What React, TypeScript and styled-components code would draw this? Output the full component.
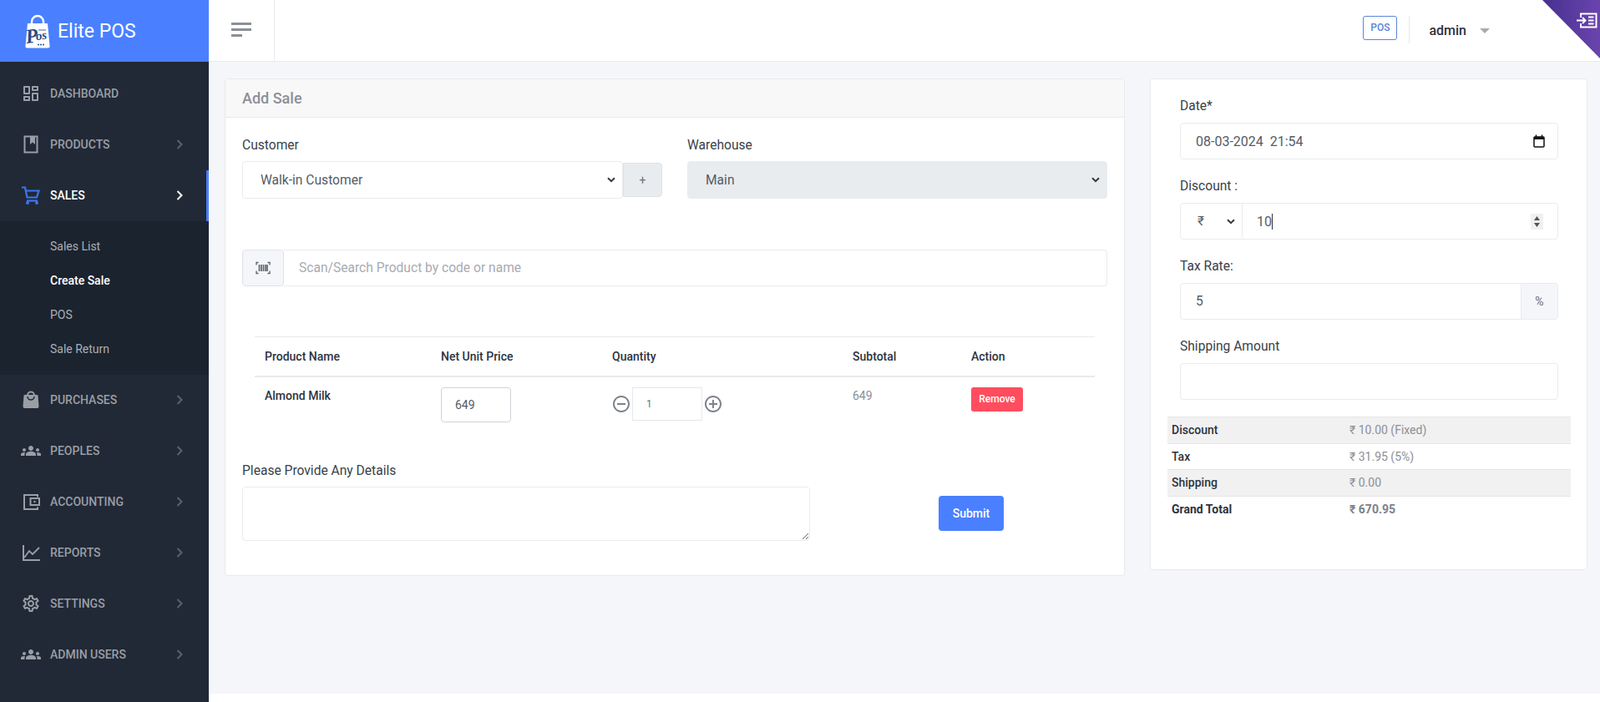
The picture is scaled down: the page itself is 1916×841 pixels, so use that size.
import React from 'react'
import styled, { createGlobalStyle } from 'styled-components'
import { MdGroups, MdOutlineSettings } from 'react-icons/md'
import { RiDashboardLine, RiIndeterminateCircleLine, RiAddCircleLine } from 'react-icons/ri'

const selectArrow =
    "url(\"data:image/svg+xml,%3Csvg xmlns='http://www.w3.org/2000/svg' width='10' height='7' viewBox='0 0 10 7'%3E%3Cpath d='M1 1.200l4 4 4-4' fill='none' stroke='%23343a40' stroke-width='2'/%3E%3C/svg%3E\")"

const GlobalStyle = createGlobalStyle`
    html, body {
        margin: 0;
        padding: 0;
        background: #fff;
        font-family: Roboto, "Liberation Sans", sans-serif;
        color: #2d3340;
    }
    * {
        box-sizing: border-box;
    }
`

const Page = styled.div`
    display: flex;
    min-height: 841px;
`

const Sidebar = styled.aside`
    width: 250px;
    flex-shrink: 0;
    background: #212936;
    display: flex;
    flex-direction: column;
`

const Brand = styled.div`
    height: 74px;
    background: #4a80ff;
    display: flex;
    align-items: center;
    gap: 9px;
    padding: 0 0 0 30px;
`

const BrandName = styled.span`
    font-size: 23px;
    color: #fff;
`

const Menu = styled.nav`
    padding-top: 8px;
    display: flex;
    flex-direction: column;
`

const MenuItem = styled.a<{ $active?: boolean }>`
    height: 61px;
    display: flex;
    align-items: center;
    gap: 11px;
    padding: 0 28px 2px 25px;
    font-size: 14px;
    font-weight: 500;
    text-transform: uppercase;
    color: ${({ $active }) => ($active ? '#fff' : '#9a9ea6')};
    border-right: 3px solid ${({ $active }) => ($active ? '#4a80ff' : 'transparent')};
    svg:first-child {
        color: ${({ $active }) => ($active ? '#3f74f0' : '#9a9ea6')};
        flex-shrink: 0;
    }
`

const MenuLabel = styled.span`
    flex: 1;
`

const ChevronMark = styled.svg<{ $active?: boolean }>`
    color: ${({ $active }) => ($active ? '#fff' : '#5a616d')};
    fill: none;
    stroke: currentColor;
    stroke-width: 2;
`

const SubMenu = styled.div`
    background: #1b232e;
    padding: 10px 0;
    display: flex;
    flex-direction: column;
`

const SubItem = styled.a<{ $active?: boolean }>`
    height: 41px;
    display: flex;
    align-items: center;
    padding: 0 0 2px 60px;
    font-size: 14px;
    font-weight: ${({ $active }) => ($active ? 500 : 400)};
    color: ${({ $active }) => ($active ? '#fff' : '#a9afb8')};
`

const Main = styled.div`
    flex: 1;
    min-width: 0;
    display: flex;
    flex-direction: column;
`

const Topbar = styled.header`
    position: relative;
    height: 74px;
    background: #fff;
    border-bottom: 1px solid #e8eaee;
    display: flex;
    align-items: stretch;
    overflow: hidden;
`

const Toggle = styled.div`
    width: 79px;
    border-right: 1px solid #e8eaee;
    display: flex;
    flex-direction: column;
    justify-content: center;
    gap: 4px;
    padding: 0 0 3px 27px;
`

const ToggleBar = styled.span<{ $w: number }>`
    display: block;
    width: ${({ $w }) => $w}px;
    height: 3px;
    background: #8b8f97;
`

const TopRight = styled.div`
    margin-left: auto;
    display: flex;
    align-items: center;
    padding: 0 132px 5px 0;
`

const PosBadge = styled.a`
    width: 41px;
    height: 29px;
    margin-bottom: 2px;
    border: 1px solid #5b85d8;
    border-radius: 3px;
    color: #5b85d8;
    font-size: 12px;
    font-weight: 500;
    display: flex;
    align-items: center;
    justify-content: center;
`

const TopDivider = styled.span`
    width: 1px;
    height: 33px;
    margin: 3px 23px 0 14px;
    background: #e8e8e8;
`

const UserName = styled.span`
    font-size: 16px;
    font-weight: 500;
    color: #2d3340;
    margin-top: 4px;
`

const Caret = styled.span`
    margin: 6px 0 0 16px;
    border-left: 6px solid transparent;
    border-right: 6px solid transparent;
    border-top: 6px solid #a7abb2;
`

const CornerTab = styled.div`
    position: absolute;
    top: 0;
    right: 0;
    width: 69px;
    height: 70px;
    background: linear-gradient(90deg, #46308f 0%, #6a44ad 100%);
    clip-path: polygon(0 0, 100% 0, 100% 100%);
    svg {
        position: absolute;
        top: 15px;
        right: 3px;
    }
`

const Content = styled.main`
    flex: 1;
    background: #f4f6f9;
    padding: 20px 15px 0 19px;
    display: flex;
    align-items: flex-start;
    gap: 30px;
`

const Footer = styled.div`
    height: 10px;
    background: #fff;
`

const Card = styled.section`
    background: #fff;
    border: 1px solid #e8eaee;
    border-radius: 4px;
`

const SaleCard = styled(Card)`
    width: 1078px;
    flex-shrink: 0;
`

const SideCard = styled(Card)`
    width: 524px;
    flex-shrink: 0;
    padding: 20px 19px 56px 20px;
`

const CardHead = styled.div`
    height: 46px;
    background: #f8f8f8;
    border-bottom: 1px solid #e8eaee;
    display: flex;
    align-items: center;
    padding-left: 20px;
    font-size: 18px;
    font-weight: 500;
    color: #8c9097;
`

const CardBody = styled.div`
    padding: 21px 20px 41px;
`

const FormGrid = styled.div`
    display: grid;
    grid-template-columns: 503px 503px;
    gap: 30px;
`

const Label = styled.label`
    display: block;
    font-size: 15.6px;
    line-height: 24px;
    margin-bottom: 7px;
    color: #3a3f4a;
`

const FieldLabel = styled(Label)`
    margin-bottom: 8px;
`

const Select = styled.select<{ $grey?: boolean }>`
    appearance: none;
    height: 45px;
    width: 100%;
    border: 1px solid #e9ebee;
    border-radius: 4px;
    padding: 0 24px 0 21px;
    font-family: inherit;
    font-size: 15.6px;
    color: #555b66;
    background: ${({ $grey }) => ($grey ? '#e9ecef' : '#fff')} ${selectArrow} no-repeat right 8px center;
    outline: none;
`

const SelectRow = styled.div`
    display: flex;
    align-items: center;
`

const AddButton = styled.button`
    width: 47px;
    height: 41px;
    flex-shrink: 0;
    border: 1px solid #dfe2e6;
    border-radius: 0 4px 4px 0;
    background: #e9ecef;
    color: #6a6f78;
    font-family: inherit;
    font-size: 14px;
`

const SearchRow = styled.div`
    display: flex;
    margin-top: 61px;
`

const ScanButton = styled.button`
    width: 50px;
    height: 44px;
    flex-shrink: 0;
    border: 1px solid #dfe2e6;
    border-radius: 4px;
    background: #f4f6f9;
    display: flex;
    align-items: center;
    justify-content: center;
    padding: 0;
`

const TextInput = styled.input`
    width: 100%;
    height: 44px;
    border: 1px solid #e9ebee;
    border-radius: 4px;
    padding: 0 18px;
    font-family: inherit;
    font-size: 15.6px;
    color: #555b66;
    background: #fff;
    outline: none;
    &::placeholder {
        color: #a8abb2;
    }
`

const SearchInput = styled(TextInput)`
    border-left: none;
    border-radius: 0 4px 4px 0;
`

const ItemsTable = styled.table`
    width: 1006px;
    margin: 60px 15px 0;
    border-collapse: collapse;
    table-layout: fixed;
    font-size: 14px;
`

const Th = styled.th`
    height: 47px;
    padding: 0 12px;
    text-align: left;
    font-weight: 500;
    color: #2d3340;
    border-top: 1px solid #e8eaee;
    border-bottom: 2px solid #e8eaee;
`

const Td = styled.td<{ $muted?: boolean; $strong?: boolean }>`
    padding: 12px 12px 46px;
    vertical-align: top;
    line-height: 20px;
    font-weight: ${({ $strong }) => ($strong ? 500 : 400)};
    color: ${({ $muted }) => ($muted ? '#8a8f98' : '#2d3340')};
`

const PriceInput = styled.input`
    width: 84px;
    height: 42px;
    border: 1px solid #ced4da;
    border-radius: 4px;
    padding: 0 16px;
    font-family: inherit;
    font-size: 14px;
    color: #555b66;
    outline: none;
`

const QtyControl = styled.div`
    display: flex;
    align-items: center;
    gap: 1px;
    color: #7d828b;
    margin-left: -1px;
`

const QtyInput = styled.input`
    width: 84px;
    height: 40px;
    border: 1px solid #e4e9ee;
    padding: 0 16px;
    font-family: inherit;
    font-size: 12px;
    color: #6b7079;
    outline: none;
`

const RemoveButton = styled.button`
    display: block;
    width: 62px;
    height: 29px;
    border: none;
    border-radius: 3px;
    background: #ff4d5f;
    color: #fff;
    font-family: inherit;
    font-size: 12px;
    font-weight: 500;
    padding: 0;
`

const NotesRow = styled.div`
    display: flex;
    align-items: flex-start;
`

const NotesColumn = styled.div`
    width: 680px;
`

const NotesArea = styled.textarea`
    display: block;
    width: 100%;
    height: 65px;
    border: 1px solid #e9ebee;
    border-radius: 4px;
    outline: none;
`

const SubmitButton = styled.button`
    width: 78px;
    height: 42px;
    margin: 42px 0 0 154px;
    border: none;
    border-radius: 4px;
    background: #4a80ff;
    color: #fff;
    font-family: inherit;
    font-size: 14px;
    font-weight: 500;
`

const FormSection = styled.div`
    padding: 0 15px;
    display: flex;
    flex-direction: column;
    gap: 20px;
`

const InputShell = styled.div`
    height: 44px;
    display: flex;
    align-items: center;
    border: 1px solid #e9ebee;
    border-radius: 4px;
    background: #fff;
`

const BareInput = styled.input<{ $w?: string }>`
    width: ${({ $w }) => $w || '100%'};
    flex-shrink: 0;
    border: none;
    outline: none;
    padding: 0;
    font-family: inherit;
    font-size: 16px;
    color: #555b66;
    background: transparent;
`

const DateShell = styled(InputShell)`
    padding: 0 15px 0 18px;
    justify-content: space-between;
    ${BareInput} {
        width: 200px;
    }
`

const GroupRow = styled.div`
    display: flex;
`

const CurrencySelect = styled(Select)`
    width: 75px;
    height: 44px;
    flex-shrink: 0;
    padding: 0 4px 0 20px;
    border-radius: 4px 0 0 4px;
`

const AmountShell = styled(InputShell)`
    flex: 1;
    border-left: none;
    border-radius: 0 4px 4px 0;
    padding: 0 17px 0 17px;
`

const TextCursor = styled.span`
    width: 1px;
    height: 19px;
    background: #2d3340;
`

const Spinner = styled.span`
    margin-left: auto;
    width: 15px;
    height: 19px;
    background: #f0f0f0;
    display: flex;
    align-items: center;
    justify-content: center;
`

const TaxInput = styled(TextInput)`
    flex: 1;
    min-width: 0;
    padding: 0 18px;
    border-radius: 4px 0 0 4px;
`

const Addon = styled.span`
    width: 44px;
    flex-shrink: 0;
    border: 1px solid #e9ebee;
    border-left: none;
    border-radius: 0 4px 4px 0;
    background: #f4f6f9;
    color: #6a6f78;
    font-size: 14px;
    display: flex;
    align-items: center;
    justify-content: center;
`

const SummaryTable = styled.table`
    width: 483px;
    margin-top: 20px;
    border-collapse: collapse;
    table-layout: fixed;
    font-size: 14px;
`

const SummaryRow = styled.tr<{ $striped?: boolean }>`
    height: 31.5px;
    background: ${({ $striped }) => ($striped ? '#f1f1f1' : '#fff')};
    border-top: 1px solid #e6e6e6;
`

const SummaryName = styled.td<{ $bold?: boolean }>`
    width: 218px;
    padding: 0 5px;
    font-weight: ${({ $bold }) => ($bold ? 700 : 500)};
    color: #2d3340;
`

const SummaryValue = styled.td<{ $bold?: boolean }>`
    padding: 0;
    font-weight: ${({ $bold }) => ($bold ? 700 : 400)};
    color: ${({ $bold }) => ($bold ? '#7d828b' : '#8c9097')};
`

function BagLogo() {
    return (
        <svg width="30" height="41" viewBox="0 0 30 41">
            <path d="M8 13V9a7 7 0 0 1 14 0v4" fill="none" stroke="#fff" strokeWidth="2.4" />
            <path d="M3 11h24l2.5 27a2 2 0 0 1-2 2.4H2.5a2 2 0 0 1-2-2.4z" fill="#fff" />
            <g transform="rotate(-8 15 28)" fontFamily="'Liberation Serif', serif" fontStyle="italic" fontWeight="700" fill="#2a4a86">
                <text x="1" y="33" fontSize="24">
                    P
                </text>
                <text x="13" y="31" fontSize="15">
                    os
                </text>
            </g>
            <rect x="16" y="18" width="9" height="2" fill="#9fb0cc" />
            <circle cx="16" cy="36.5" r="1" fill="#2a4a86" />
            <circle cx="19" cy="36.5" r="1" fill="#2a4a86" />
            <circle cx="22" cy="36.5" r="1" fill="#2a4a86" />
        </svg>
    )
}

function Chevron({ active }: { active?: boolean }) {
    return (
        <ChevronMark $active={active} width="8" height="12" viewBox="0 0 8 12">
            <path d="M1.5 1l5 5-5 5" />
        </ChevronMark>
    )
}

type IconProps = { size: number }

function BookIcon({ size }: IconProps) {
    return (
        <svg width={size} height={size} viewBox="0 0 24 24">
            <path d="M4.5 2.5h15v19h-15z" fill="none" stroke="currentColor" strokeWidth="2" />
            <path d="M11 3h6v9l-3-2.5-3 2.5z" fill="currentColor" />
        </svg>
    )
}

function CartIcon({ size }: IconProps) {
    return (
        <svg width={size} height={size} viewBox="0 0 24 24" fill="none" stroke="currentColor" strokeWidth="2.2">
            <path d="M1 2.5h4l2.5 12h12.5" />
            <path d="M5.5 6.5h16l-2.5 8" />
            <path d="M7 18.5h13" />
            <circle cx="8" cy="21" r="2" fill="currentColor" stroke="none" />
            <circle cx="19" cy="21" r="2" fill="currentColor" stroke="none" />
        </svg>
    )
}

function BagIcon({ size }: IconProps) {
    return (
        <svg width={size} height={size} viewBox="0 0 24 24">
            <path d="M8 8V6.5a4 4 0 0 1 8 0V8" fill="none" stroke="currentColor" strokeWidth="2" />
            <path d="M4.5 6h15a1 1 0 0 1 1 1l1 13a2 2 0 0 1-2 2H4.500a2 2 0 0 1-2-2l1-13a1 1 0 0 1 1-1z" fill="currentColor" />
            <path d="M8 8a4 4 0 0 0 8 0" fill="none" stroke="#212936" strokeWidth="1.6" />
        </svg>
    )
}

function WalletIcon({ size }: IconProps) {
    return (
        <svg width={size} height={size} viewBox="0 0 24 24" fill="none" stroke="currentColor" strokeWidth="2">
            <path d="M20 6.5V4H4v17h16v-2.5" />
            <path d="M11.5 8h10.5v8H11.5z" />
            <circle cx="16.5" cy="12" r="1.2" fill="currentColor" stroke="none" />
        </svg>
    )
}

function ChartIcon({ size }: IconProps) {
    return (
        <svg width={size} height={size} viewBox="0 0 24 24" fill="none" stroke="currentColor" strokeWidth="2">
            <path d="M3 3v18h20" />
            <path d="M4 18l6-8 4 4 8-8" strokeWidth="1.8" />
        </svg>
    )
}

function BarcodeIcon() {
    return (
        <svg width="18" height="16" viewBox="0 0 18 16" fill="none" stroke="#5c6068" strokeWidth="1.3">
            <path d="M3.5 1.5H1v3M14.5 1.5H17v3M3.5 14.5H1v-3M14.5 14.5H17v-3" />
            <path d="M4.5 4v8M7 4v8M9.5 4v8M12 4v8M14 4v8" strokeWidth="1.6" />
        </svg>
    )
}

function CalendarIcon() {
    return (
        <svg width="14" height="16" viewBox="0 0 14 16" fill="none" stroke="#111">
            <rect x="1" y="3" width="12" height="12" rx="1" strokeWidth="1.5" />
            <path d="M1 4.5h12" strokeWidth="3" />
            <path d="M3.5 0.5v2.5M10.5 0.5v2.5" strokeWidth="1.5" />
        </svg>
    )
}

function SpinArrows() {
    return (
        <svg width="9" height="15" viewBox="0 0 9 15" fill="#555">
            <path d="M4.5 1L8 6H1zM4.5 14L1 9h7z" />
        </svg>
    )
}

function PanelIcon() {
    return (
        <svg width="25" height="19" viewBox="0 0 25 19" fill="none" stroke="#fff" strokeWidth="2">
            <path d="M5 6V1.5h18.5v16H5V13" />
            <path d="M0 9.5h10M7 6l3.5 3.5L7 13" />
            <path d="M14 5.5h6.5M14 9.5h6.5M14 13.5h6.5" />
        </svg>
    )
}

const menuAbove = [
    { label: 'Dashboard', Icon: RiDashboardLine, chevron: false },
    { label: 'Products', Icon: BookIcon, chevron: true },
]

const salesLinks = ['Sales List', 'Create Sale', 'POS', 'Sale Return']

const menuBelow = [
    { label: 'Purchases', Icon: BagIcon },
    { label: 'Peoples', Icon: MdGroups },
    { label: 'Accounting', Icon: WalletIcon },
    { label: 'Reports', Icon: ChartIcon },
    { label: 'Settings', Icon: MdOutlineSettings },
    { label: 'Admin Users', Icon: MdGroups },
]

const totals = [
    { name: 'Discount', value: '₹ 10.00 (Fixed)' },
    { name: 'Tax', value: '₹ 31.95 (5%)' },
    { name: 'Shipping', value: '₹ 0.00' },
    { name: 'Grand Total', value: '₹ 670.95', bold: true },
]

export default function App() {
    return (
        <Page>
            <GlobalStyle />
            <Sidebar>
                <Brand>
                    <BagLogo />
                    <BrandName>Elite POS</BrandName>
                </Brand>
                <Menu>
                    {menuAbove.map(({ label, Icon, chevron }) => (
                        <MenuItem key={label}>
                            <Icon size={24} />
                            <MenuLabel>{label}</MenuLabel>
                            {chevron && <Chevron />}
                        </MenuItem>
                    ))}
                    <MenuItem $active>
                        <CartIcon size={24} />
                        <MenuLabel>Sales</MenuLabel>
                        <Chevron active />
                    </MenuItem>
                    <SubMenu>
                        {salesLinks.map((link) => (
                            <SubItem key={link} $active={link === 'Create Sale'}>
                                {link}
                            </SubItem>
                        ))}
                    </SubMenu>
                    {menuBelow.map(({ label, Icon }) => (
                        <MenuItem key={label}>
                            <Icon size={24} />
                            <MenuLabel>{label}</MenuLabel>
                            <Chevron />
                        </MenuItem>
                    ))}
                </Menu>
            </Sidebar>
            <Main>
                <Topbar>
                    <Toggle>
                        <ToggleBar $w={24} />
                        <ToggleBar $w={24} />
                        <ToggleBar $w={13} />
                    </Toggle>
                    <TopRight>
                        <PosBadge>POS</PosBadge>
                        <TopDivider />
                        <UserName>admin</UserName>
                        <Caret />
                    </TopRight>
                    <CornerTab>
                        <PanelIcon />
                    </CornerTab>
                </Topbar>
                <Content>
                    <SaleCard>
                        <CardHead>Add Sale</CardHead>
                        <CardBody>
                            <FormGrid>
                                <div>
                                    <Label>Customer</Label>
                                    <SelectRow>
                                        <Select>
                                            <option>Walk-in Customer</option>
                                        </Select>
                                        <AddButton>+</AddButton>
                                    </SelectRow>
                                </div>
                                <div>
                                    <Label>Warehouse</Label>
                                    <Select $grey>
                                        <option>Main</option>
                                    </Select>
                                </div>
                            </FormGrid>
                            <SearchRow>
                                <ScanButton>
                                    <BarcodeIcon />
                                </ScanButton>
                                <SearchInput placeholder="Scan/Search Product by code or name" />
                            </SearchRow>
                            <ItemsTable>
                                <colgroup>
                                    <col width="211" />
                                    <col width="205" />
                                    <col width="288" />
                                    <col width="142" />
                                    <col width="160" />
                                </colgroup>
                                <thead>
                                    <tr>
                                        <Th>Product Name</Th>
                                        <Th>Net Unit Price</Th>
                                        <Th>Quantity</Th>
                                        <Th>Subtotal</Th>
                                        <Th>Action</Th>
                                    </tr>
                                </thead>
                                <tbody>
                                    <tr>
                                        <Td $strong>Almond Milk</Td>
                                        <Td>
                                            <PriceInput defaultValue="649" />
                                        </Td>
                                        <Td>
                                            <QtyControl>
                                                <RiIndeterminateCircleLine size={24} />
                                                <QtyInput defaultValue="1" />
                                                <RiAddCircleLine size={24} />
                                            </QtyControl>
                                        </Td>
                                        <Td $muted>649</Td>
                                        <Td>
                                            <RemoveButton>Remove</RemoveButton>
                                        </Td>
                                    </tr>
                                </tbody>
                            </ItemsTable>
                            <NotesRow>
                                <NotesColumn>
                                    <Label>Please Provide Any Details</Label>
                                    <NotesArea />
                                </NotesColumn>
                                <SubmitButton>Submit</SubmitButton>
                            </NotesRow>
                        </CardBody>
                    </SaleCard>
                    <SideCard>
                        <FormSection>
                            <div>
                                <FieldLabel>Date*</FieldLabel>
                                <DateShell>
                                    <BareInput defaultValue="08-03-2024  21:54" />
                                    <CalendarIcon />
                                </DateShell>
                            </div>
                            <div>
                                <FieldLabel>Discount :</FieldLabel>
                                <GroupRow>
                                    <CurrencySelect>
                                        <option>₹</option>
                                    </CurrencySelect>
                                    <AmountShell>
                                        <BareInput $w="18px" defaultValue="10" />
                                        <TextCursor />
                                        <Spinner>
                                            <SpinArrows />
                                        </Spinner>
                                    </AmountShell>
                                </GroupRow>
                            </div>
                            <div>
                                <FieldLabel>Tax Rate:</FieldLabel>
                                <GroupRow>
                                    <TaxInput defaultValue="5" />
                                    <Addon>%</Addon>
                                </GroupRow>
                            </div>
                            <div>
                                <FieldLabel>Shipping Amount</FieldLabel>
                                <TextInput />
                            </div>
                        </FormSection>
                        <SummaryTable>
                            <tbody>
                                {totals.map(({ name, value, bold }, i) => (
                                    <SummaryRow key={name} $striped={i % 2 === 0}>
                                        <SummaryName $bold={bold}>{name}</SummaryName>
                                        <SummaryValue $bold={bold}>{value}</SummaryValue>
                                    </SummaryRow>
                                ))}
                            </tbody>
                        </SummaryTable>
                    </SideCard>
                </Content>
                <Footer />
            </Main>
        </Page>
    )
}
